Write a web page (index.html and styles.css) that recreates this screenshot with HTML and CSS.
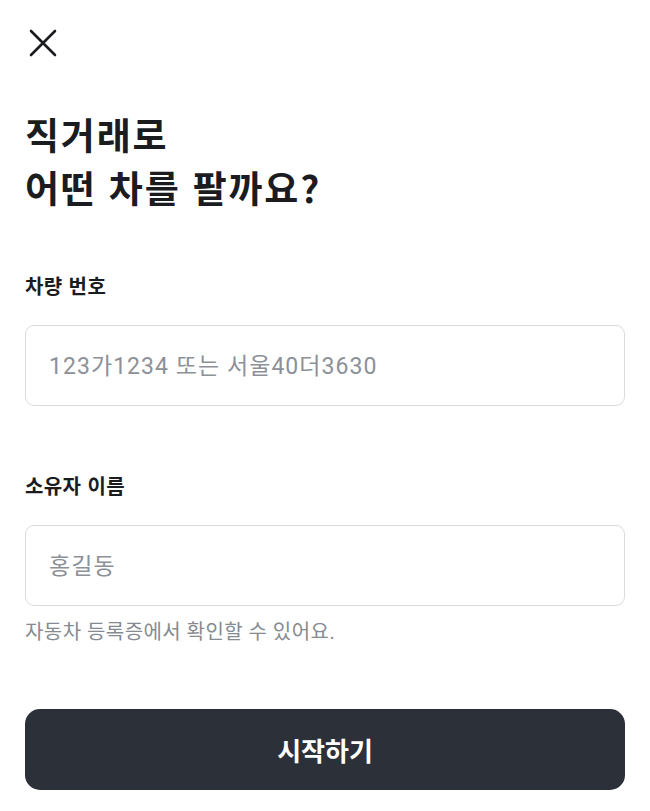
FILE: index.html
```html
<!DOCTYPE html>
<html lang="ko">
<head>
<meta charset="utf-8">
<link rel="stylesheet" href="styles.css">
</head>
<body>
<div class="page">
  <header class="top">
    <svg class="close" viewBox="0 0 28 28" width="28" height="28" aria-label="닫기">
      <path d="M2 2 L26 26 M26 2 L2 26" stroke="#1b1c1f" stroke-width="2.6" stroke-linecap="round" fill="none"/>
    </svg>
  </header>
  <h1 class="title">직거래로<br>어떤 차를 팔까요?</h1>
  <section class="field">
    <label class="label">차량 번호</label>
    <div class="input"><span class="ph">123가1234 또는 서울40더3630</span></div>
  </section>
  <section class="field second">
    <label class="label">소유자 이름</label>
    <div class="input"><span class="ph">홍길동</span></div>
    <p class="help">자동차 등록증에서 확인할 수 있어요.</p>
  </section>
  <button class="start">시작하기</button>
</div>
</body>
</html>
```

FILE: styles.css
```css
html, body {
  margin: 0;
  padding: 0;
  background: #ffffff;
}
body {
  font-family: Roboto, "Noto Sans CJK KR", sans-serif;
  color: #1b1c1f;
}
.page {
  padding: 0 25px;
  display: flex;
  flex-direction: column;
}
.top {
  padding: 29px 0 0 4px;
  height: 28px;
}
.close {
  display: block;
}
.title {
  margin: 51px 0 0 0;
  font-family: "Noto Sans CJK KR", sans-serif;
  font-weight: 700;
  font-size: 37px;
  line-height: 53px;
  color: #1b1c1f;
  letter-spacing: 1.8px;
}
.field {
  display: flex;
  flex-direction: column;
  margin-top: 58px;
}
.field.second {
  margin-top: 66px;
}
.label {
  font-family: "Noto Sans CJK KR", sans-serif;
  font-weight: 700;
  font-size: 20px;
  line-height: 28px;
  color: #1b1c1f;
  letter-spacing: 0.4px;
}
.input {
  box-sizing: border-box;
  margin-top: 25px;
  height: 81px;
  border: 1px solid #d9dbde;
  border-radius: 9px;
  display: flex;
  align-items: center;
  padding: 0 23px 3px;
}
.ph {
  font-size: 23px;
  color: #8c9097;
  letter-spacing: 1.05px;
}
.help {
  margin: 12px 0 0 0;
  font-size: 20px;
  line-height: 28px;
  color: #868a91;
  letter-spacing: 0.45px;
}
.start {
  margin-top: 63px;
  height: 81px;
  border: none;
  border-radius: 15px;
  background: #2b3039;
  color: #ffffff;
  font-family: "Noto Sans CJK KR", sans-serif;
  font-weight: 700;
  font-size: 26px;
}
```
